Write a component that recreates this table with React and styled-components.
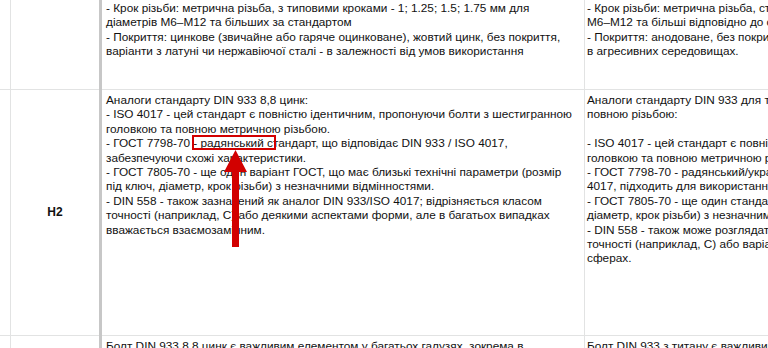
import React from "react";
import styled, { createGlobalStyle } from "styled-components";

const GlobalStyle = createGlobalStyle`
  html, body {
    margin: 0;
    padding: 0;
    background: #fff;
    overflow: hidden;
  }
  body {
    font-family: "Liberation Sans", Arial, sans-serif;
  }
`;

const Viewport = styled.div`
  width: 768px;
  height: 348px;
  overflow: hidden;
`;

const Sheet = styled.div`
  display: grid;
  grid-template-columns: 11px 88px 3px 483px 330px;
  grid-template-rows: 121px 246px 80px;
  margin-top: -31px;
  font-family: "Liberation Sans", Arial, sans-serif;
  font-size: 11.8px;
  line-height: 14.4px;
  color: #111;
`;

const Cell = styled.div`
  position: relative;
  box-sizing: border-box;
  border-right: ${(p) => (p.$noRight ? "none" : "1px solid #e2e3e3")};
  border-bottom: 1px solid #e2e3e3;
  overflow: hidden;
  padding: ${(p) => p.$pad || "3px 3px"};
`;

const LabelCell = styled(Cell)`
  display: flex;
  align-items: center;
  justify-content: center;
  font-weight: bold;
  font-size: 12px;
  padding: 0;
`;

const FrozenDivider = styled.div`
  grid-column: 3;
  grid-row: 1 / -1;
  background: #c7c7c7;
`;

const Line = styled.div`
  white-space: nowrap;
  min-height: 14.4px;
`;

const Marker = styled.div`
  position: absolute;
  left: 90px;
  top: 45px;
  width: 84px;
  height: 15px;
  box-sizing: border-box;
  border: 2px solid #d20000;
`;

const Arrow = styled.svg`
  position: absolute;
  left: 122px;
  top: 60px;
  overflow: visible;
`;

const TextBlock = ({ lines }) => (
  <>
    {lines.map((l, i) => (
      <Line key={i}>{l}</Line>
    ))}
  </>
);

const topC = [
  "- Матеріал: вуглецева сталь класу міцності 8.8 з термообробкою",
  "- Розміри: довжина та діаметр відповідно до таблиць стандарту DIN 933",
  "- Крок різьби: метрична різьба, з типовими кроками - 1; 1.25; 1.5; 1.75 мм для",
  "діаметрів М6–М12 та більших за стандартом",
  "- Покриття: цинкове (звичайне або гаряче оцинковане), жовтий цинк, без покриття,",
  "варіанти з латуні чи нержавіючої сталі - в залежності від умов використання",
];

const topD = [
  "- Матеріал: титан марок Grade 2 або Grade 5 (Ti-6Al-4V)",
  "- Розміри: відповідно до таблиць стандарту DIN 933",
  "- Крок різьби: метрична різьба, стандартні кроки для діаметрів",
  "М6–М12 та більші відповідно до стандарту",
  "- Покриття: анодоване, без покриття, для стійкості до корозії",
  "в агресивних середовищах.",
];

const midC = [
  "Аналоги стандарту DIN 933 8,8 цинк:",
  "- ISO 4017 - цей стандарт є повністю ідентичним, пропонуючи болти з шестигранною",
  "головкою та повною метричною різьбою.",
  "- ГОСТ 7798-70 - радянський стандарт, що відповідає DIN 933 / ISO 4017,",
  "забезпечуючи схожі характеристики.",
  "- ГОСТ 7805-70 - ще один варіант ГОСТ, що має близькі технічні параметри (розмір",
  "під ключ, діаметр, крок різьби) з незначними відмінностями.",
  "- DIN 558 - також зазначений як аналог DIN 933/ISO 4017; відрізняється класом",
  "точності (наприклад, С) або деякими аспектами форми, але в багатьох випадках",
  "вважається взаємозамінним.",
];

const midD = [
  "Аналоги стандарту DIN 933 для титанових болтів з",
  "повною різьбою:",
  "",
  "- ISO 4017 - цей стандарт є повністю ідентичним, з шестигранною",
  "головкою та повною метричною різьбою.",
  "- ГОСТ 7798-70 - радянський/український стандарт, відповідний ISO",
  "4017, підходить для використання з титановими болтами.",
  "- ГОСТ 7805-70 - ще один стандарт з близькими параметрами (розмір",
  "діаметр, крок різьби) з незначними відмінностями.",
  "- DIN 558 - також може розглядатися як аналог, але відрізняється класом",
  "точності (наприклад, С) або варіантами виконання, що важливо в окремих",
  "сферах.",
];

export default function App() {
  return (
    <Viewport>
      <GlobalStyle />
      <Sheet>
        <Cell />
        <Cell $noRight />
        <FrozenDivider />
        <Cell $pad="3px 4px">
          <TextBlock lines={topC} />
        </Cell>
        <Cell $pad="3px 2px">
          <TextBlock lines={topD} />
        </Cell>

        <Cell />
        <LabelCell $noRight>H2</LabelCell>
        <Cell $pad="3px 4px">
          <TextBlock lines={midC} />
          <Marker />
          <Arrow width="24" height="100" viewBox="0 0 24 100">
            <path d="M0 22 L11.5 0 L23 22 L15 22 L15 97 L8 97 L8 22 Z" fill="#d20000" />
          </Arrow>
        </Cell>
        <Cell $pad="3px 2px">
          <TextBlock lines={midD} />
        </Cell>

        <Cell />
        <Cell $noRight />
        <Cell $pad="3px 4px">
          <TextBlock lines={["Болт DIN 933 8,8 цинк є важливим елементом у багатьох галузях, зокрема в"]} />
        </Cell>
        <Cell $pad="3px 2px">
          <TextBlock lines={["Болт DIN 933 з титану є важливим елементом у багатьох галузях"]} />
        </Cell>
      </Sheet>
    </Viewport>
  );
}
